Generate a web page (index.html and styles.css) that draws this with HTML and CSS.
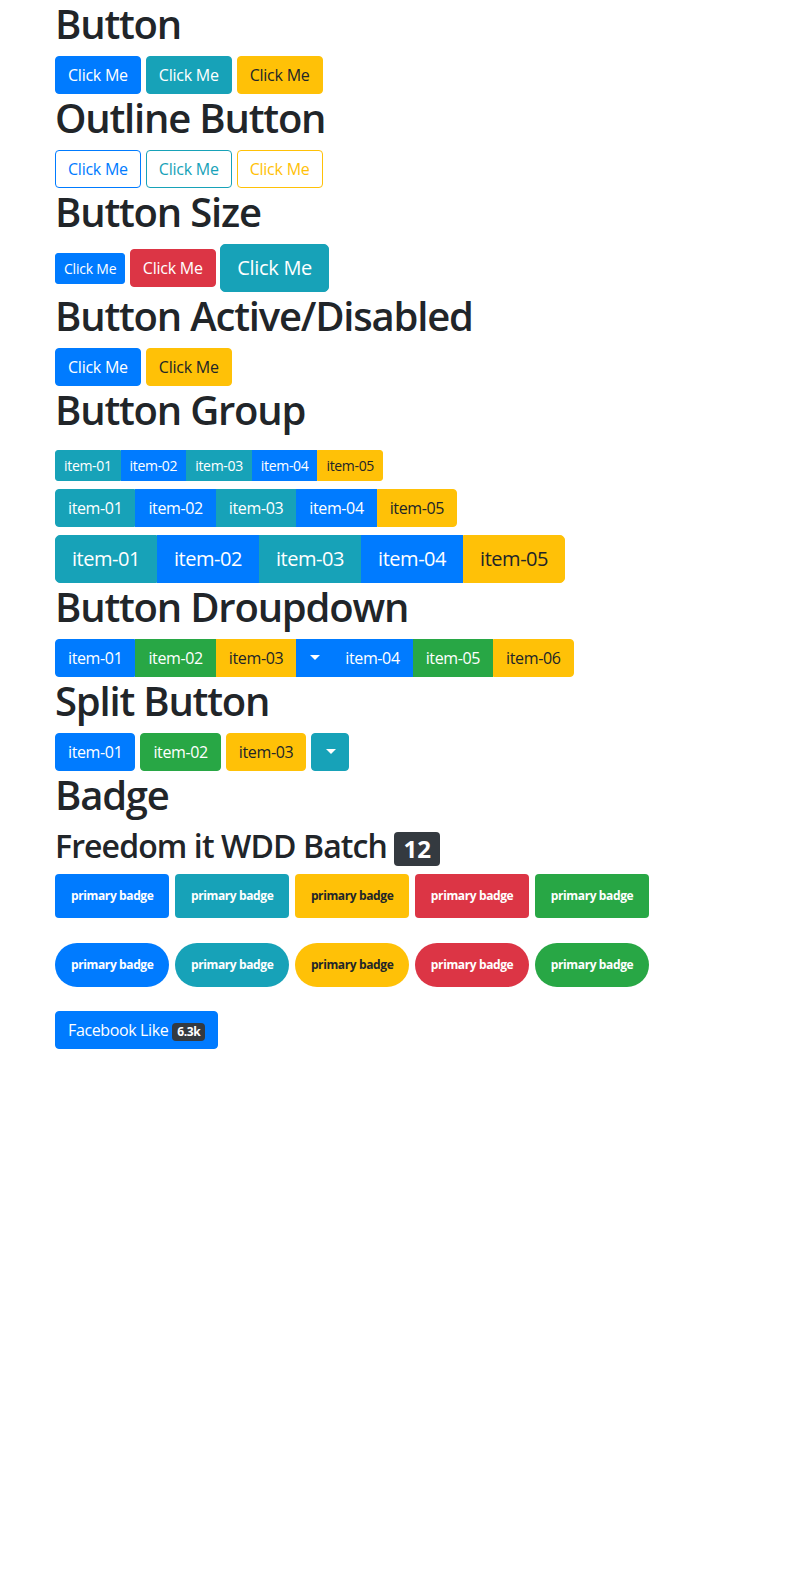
FILE: index.html
```html
<!DOCTYPE html>
<html lang="en">
<head>
<meta charset="utf-8">
<title>Bootstrap Buttons</title>
<link rel="stylesheet" href="styles.css">
</head>
<body>
<div class="container">
  <h1>Button</h1>
  <div class="btn-row">
    <button class="btn btn-primary">Click Me</button>
    <button class="btn btn-info">Click Me</button>
    <button class="btn btn-warning">Click Me</button>
  </div>

  <h1>Outline Button</h1>
  <div class="btn-row">
    <button class="btn btn-outline-primary">Click Me</button>
    <button class="btn btn-outline-info">Click Me</button>
    <button class="btn btn-outline-warning">Click Me</button>
  </div>

  <h1>Button Size</h1>
  <div class="btn-row btn-row-sizes">
    <button class="btn btn-sm btn-primary">Click Me</button>
    <button class="btn btn-danger">Click Me</button>
    <button class="btn btn-lg btn-info">Click Me</button>
  </div>

  <h1>Button Active/Disabled</h1>
  <div class="btn-row">
    <button class="btn btn-primary active">Click Me</button>
    <button class="btn btn-warning">Click Me</button>
  </div>

  <h1>Button Group</h1>
  <div class="group-stack">
    <div class="btn-group btn-group-sm group-first">
      <button class="btn btn-info">item-01</button>
      <button class="btn btn-primary">item-02</button>
      <button class="btn btn-info">item-03</button>
      <button class="btn btn-primary">item-04</button>
      <button class="btn btn-warning">item-05</button>
    </div>
    <div class="btn-group group-second">
      <button class="btn btn-info">item-01</button>
      <button class="btn btn-primary">item-02</button>
      <button class="btn btn-info">item-03</button>
      <button class="btn btn-primary">item-04</button>
      <button class="btn btn-warning">item-05</button>
    </div>
    <div class="btn-group btn-group-lg group-third">
      <button class="btn btn-info">item-01</button>
      <button class="btn btn-primary">item-02</button>
      <button class="btn btn-info">item-03</button>
      <button class="btn btn-primary">item-04</button>
      <button class="btn btn-warning">item-05</button>
    </div>
  </div>

  <h1>Button Droupdown</h1>
  <div class="btn-group">
    <button class="btn btn-primary">item-01</button>
    <button class="btn btn-success">item-02</button>
    <button class="btn btn-warning">item-03</button>
    <button class="btn btn-primary dropdown-toggle group-toggle"><span class="caret"></span></button>
    <button class="btn btn-primary">item-04</button>
    <button class="btn btn-success">item-05</button>
    <button class="btn btn-warning">item-06</button>
  </div>

  <h1>Split Button</h1>
  <div class="btn-row btn-row-split">
    <button class="btn btn-primary">item-01</button>
    <button class="btn btn-success">item-02</button>
    <button class="btn btn-warning">item-03</button>
    <button class="btn btn-info dropdown-toggle"><span class="caret"></span></button>
  </div>

  <h1>Badge</h1>
  <h2>Freedom it WDD Batch <span class="badge badge-dark badge-head">12</span></h2>
  <div class="badge-row">
    <span class="badge badge-big badge-primary">primary badge</span>
    <span class="badge badge-big badge-info">primary badge</span>
    <span class="badge badge-big badge-warning">primary badge</span>
    <span class="badge badge-big badge-danger">primary badge</span>
    <span class="badge badge-big badge-success">primary badge</span>
  </div>
  <div class="badge-row badge-row-pill">
    <span class="badge badge-big badge-pill badge-primary">primary badge</span>
    <span class="badge badge-big badge-pill badge-info">primary badge</span>
    <span class="badge badge-big badge-pill badge-warning">primary badge</span>
    <span class="badge badge-big badge-pill badge-danger">primary badge</span>
    <span class="badge badge-big badge-pill badge-success">primary badge</span>
  </div>
  <div class="fb-row">
    <button class="btn btn-primary">Facebook Like <span class="badge badge-dark badge-count">6.3k</span></button>
  </div>
</div>
</body>
</html>
```

FILE: styles.css
```css
* { box-sizing: border-box; }

body {
  margin: 0;
  font-family: "Open Sans", "Noto Sans", Arial, sans-serif;
  font-size: 16px;
  line-height: 1.5;
  color: #212529;
  background: #fff;
}

.container {
  width: 720px;
  margin: 0 auto;
  padding: 0 15px;
}

h1 {
  margin: 0 0 8px;
  font-size: 40px;
  font-weight: 600;
  line-height: 48px;
  letter-spacing: -0.03em;
}

h2 {
  margin: 8px 0 8px;
  font-size: 32px;
  font-weight: 600;
  line-height: 38px;
  letter-spacing: -0.028em;
}

.btn-row {
  display: flex;
  gap: 5px;
  align-items: center;
}

.btn-row-sizes { gap: 4.5px; height: 48px; }

.btn {
  display: inline-block;
  font-family: inherit;
  font-size: 16px;
  font-weight: 400;
  line-height: 24px;
  letter-spacing: -0.023em;
  padding: 6px 12px;
  border: 1px solid transparent;
  border-radius: 4px;
  color: #fff;
  background: transparent;
  text-align: center;
  white-space: nowrap;
  cursor: pointer;
}

.btn-row .btn { letter-spacing: -0.015em; }
.btn-row-split .btn { letter-spacing: -0.023em; }

.btn-sm { font-size: 14px; line-height: 21px; padding: 4px 8px; border-radius: 3px; }
.btn-lg { font-size: 20px; line-height: 30px; padding: 8px 16px; border-radius: 5px; }

.btn-primary { background: #007bff; border-color: #007bff; color: #fff; }
.btn-info { background: #17a2b8; border-color: #17a2b8; color: #fff; }
.btn-warning { background: #ffc107; border-color: #ffc107; color: #212529; }
.btn-danger { background: #dc3545; border-color: #dc3545; color: #fff; }
.btn-success { background: #28a745; border-color: #28a745; color: #fff; }

.btn-outline-primary { border-color: #007bff; color: #007bff; }
.btn-outline-info { border-color: #17a2b8; color: #17a2b8; }
.btn-outline-warning { border-color: #ffc107; color: #ffc107; }

.group-stack {
  display: flex;
  flex-direction: column;
  align-items: flex-start;
}
.group-first { margin-top: 8px; }
.group-second { margin-top: 8px; }
.group-third { margin-top: 8px; }

.btn-group {
  display: inline-flex;
  vertical-align: middle;
}
.btn-group > .btn { border-radius: 0; }
.btn-group > .btn:first-child { border-top-left-radius: 4px; border-bottom-left-radius: 4px; }
.btn-group > .btn:last-child { border-top-right-radius: 4px; border-bottom-right-radius: 4px; }
.btn-group-sm > .btn { font-size: 14px; line-height: 21px; padding: 4px 8px; }
.btn-group-sm > .btn:first-child { border-top-left-radius: 3px; border-bottom-left-radius: 3px; }
.btn-group-sm > .btn:last-child { border-top-right-radius: 3px; border-bottom-right-radius: 3px; }
.btn-group-lg > .btn { font-size: 20px; line-height: 30px; padding: 8px 16px; }
.btn-group-lg > .btn:first-child { border-top-left-radius: 5px; border-bottom-left-radius: 5px; }
.btn-group-lg > .btn:last-child { border-top-right-radius: 5px; border-bottom-right-radius: 5px; }

.dropdown-toggle { padding-left: 12px; padding-right: 12px; }
.btn-group > .group-toggle { padding-left: 11px; padding-right: 11px; }
.caret {
  display: inline-block;
  width: 0;
  height: 0;
  margin-left: 2px;
  vertical-align: 4px;
  border-top: 5px solid #fff;
  border-right: 5px solid transparent;
  border-left: 5px solid transparent;
}

.badge {
  display: inline-block;
  font-size: 75%;
  font-weight: 700;
  line-height: 1;
  text-align: center;
  white-space: nowrap;
  vertical-align: baseline;
  padding: 0.25em 0.4em;
  border-radius: 4px;
  color: #fff;
  letter-spacing: -0.02em;
}
.badge-dark { background: #343a40; color: #fff; }
.badge-primary { background: #007bff; }
.badge-info { background: #17a2b8; }
.badge-warning { background: #ffc107; color: #212529; }
.badge-danger { background: #dc3545; }
.badge-success { background: #28a745; }
.badge-pill { border-radius: 160px; }

.badge-head { padding: 5px 9px; letter-spacing: 0; }

.badge-big { font-size: 12px; padding: 16px; letter-spacing: -0.032em; }

.badge-row {
  display: flex;
  gap: 5.5px;
}
.badge-row-pill { margin-top: 25px; }

.fb-row { margin-top: 24px; }
.badge-count { font-size: 12px; padding: 3px 5px; letter-spacing: -0.032em; }
```
